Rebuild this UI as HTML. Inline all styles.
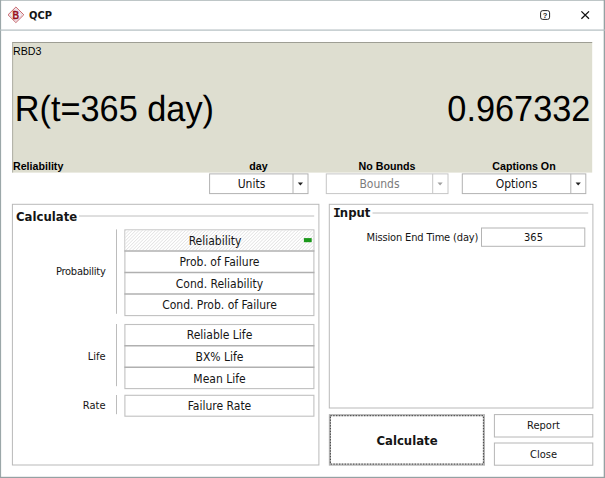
<!DOCTYPE html>
<html><head><meta charset="utf-8"><title>QCP</title>
<style>
*{box-sizing:border-box;margin:0;padding:0}
html,body{width:605px;height:478px;overflow:hidden;background:#fff}
body{position:relative;font-family:"DejaVu Sans Condensed","Liberation Sans",sans-serif;font-size:11px;color:#111}
.abs{position:absolute}
#lines{position:absolute;left:0;top:0}
.t{position:absolute;white-space:nowrap;line-height:16px;height:16px;color:#151515}
.c{text-align:center}
.r{text-align:right}
.ar{font-family:"Liberation Sans",sans-serif;color:#000}
.b{font-weight:bold}
.cap{font-size:10.67px}
.big{text-rendering:geometricPrecision;font-size:34.3px;line-height:40px;height:40px;transform:scaleY(1.055);transform-origin:0 32px}
.f12{font-size:12px}
.f13{font-size:13px}
</style></head><body>
<svg id="lines" width="605" height="478" viewBox="0 0 605 478">
 <defs>
  <pattern id="hatch" width="2.35" height="2.35" patternUnits="userSpaceOnUse" patternTransform="rotate(-45)">
   <rect width="2.35" height="2.35" fill="#fff"/><rect y="0" width="2.35" height="0.75" fill="#e2e2e2"/>
  </pattern>
 </defs>
 <!-- window frame -->
 <rect x="0" y="0" width="605" height="478" fill="#fff"/>
 <rect x="0" y="0" width="605" height="0.8" fill="#aeb8ba"/>
 <rect x="0" y="0" width="1.1" height="478" fill="#9ba7a9"/>
 <rect x="603.7" y="0" width="1.3" height="478" fill="#95a1a3"/>
 <rect x="0" y="476.8" width="605" height="1.2" fill="#95a1a3"/>
 <rect x="0" y="29.5" width="605" height="1.2" fill="#b3bec1"/>
 <!-- display panel -->
 <rect x="12.2" y="42.1" width="580" height="130.5" fill="#deded0"/>
 <rect x="12.2" y="42.1" width="580" height="0.9" fill="#97978d"/>
 <rect x="12.2" y="42.1" width="0.9" height="130.5" fill="#a9a99e"/>
 <!-- dropdowns -->
 <g fill="#fff" stroke="#b2b2b2" stroke-width="1">
  <rect x="209.6" y="173.9" width="98.4" height="19.7"/>
  <path d="M293 173.9V193.6"/>
  <rect x="462.3" y="173.9" width="123.5" height="19.7"/>
  <path d="M570.8 173.9V193.6"/>
 </g>
 <g fill="#fff" stroke="#c6c6c6" stroke-width="1">
  <rect x="326.3" y="173.9" width="121.7" height="19.7"/>
  <path d="M432.7 173.9V193.6"/>
 </g>
 <path d="M297.8 182.6h5.2l-2.6 2.8z" fill="#222"/>
 <path d="M575.6 182.6h5.2l-2.6 2.8z" fill="#222"/>
 <path d="M437.5 182.6h5.2l-2.6 2.8z" fill="#a0a0a0"/>
 <!-- group boxes -->
 <g fill="none" stroke="#b9b9b9" stroke-width="1">
  <rect x="12.4" y="204.3" width="306.5" height="260.7"/>
  <rect x="329.3" y="204.3" width="263.6" height="203.7"/>
 </g>
 <g stroke="#bebebe" stroke-width="1">
  <path d="M79 216H314.2"/>
  <path d="M372.5 213H588.2"/>
 </g>
 <g stroke="#b4b4b4" stroke-width="0.9">
  <path d="M116.5 229.4V313.8"/>
  <path d="M116.5 324V386.2"/>
  <path d="M116.5 395V414.2"/>
 </g>
 <!-- calculate option buttons -->
 <g fill="#fff" stroke="#c0c0c0" stroke-width="1.1">
  <rect x="124.9" y="229.9" width="189" height="85.7"/>
  <rect x="124.9" y="324.5" width="189" height="64.1"/>
  <rect x="124.9" y="395.3" width="189" height="20.9"/>
 </g>
 <rect x="125.5" y="230.5" width="187.8" height="20" fill="url(#hatch)"/>
 <g stroke="#b0b0b0" stroke-width="1.5">
  <path d="M124.4 251.1H314.4"/>
  <path d="M124.4 272.5H314.4"/>
  <path d="M124.4 294H314.4"/>
  <path d="M124.4 345.7H314.4"/>
  <path d="M124.4 367.2H314.4"/>
 </g>
 <rect x="303.9" y="238.1" width="7.8" height="4.1" fill="#1a981a"/>
 <!-- input field -->
 <rect x="481.5" y="228" width="103.3" height="18.3" fill="#fff" stroke="#b4b4b4" stroke-width="1"/>
 <!-- bottom buttons -->
 <rect x="329.4" y="414.7" width="155" height="50.4" fill="#fff" stroke="#b0b0b0" stroke-width="1.1"/>
 <rect x="330.4" y="415.7" width="153" height="48.4" fill="none" stroke="#b4b4b4" stroke-width="1"/><rect x="330.4" y="415.7" width="153" height="48.4" fill="none" stroke="#404040" stroke-width="1" stroke-dasharray="1.4 1.4"/>
 <g fill="#fff" stroke="#b6b6b6" stroke-width="1">
  <rect x="494.4" y="414.6" width="98.4" height="22.4"/>
  <rect x="494.4" y="443" width="98.4" height="22.2"/>
 </g>
 <!-- title icon -->
 <polygon points="15.9,7 23.8,14.8 15.9,22.6 8,14.8" fill="#eef3f8" stroke="#c5555b" stroke-width="0.9"/>
 <polygon points="15.9,8.7 22.1,14.8 15.9,20.9 9.7,14.8" fill="none" stroke="#ecc0c3" stroke-width="0.7"/>
 <text x="0" y="0" transform="translate(15.8 18.8) scale(0.86 1)" text-anchor="middle" font-family="Liberation Sans, sans-serif" font-weight="bold" font-size="10.6" fill="#9c1020" stroke="#9c1020" stroke-width="0.3">B</text>
 <!-- help + close -->
 <rect x="540.6" y="10.6" width="9" height="8.8" rx="2.2" fill="none" stroke="#222" stroke-width="1"/>
 <text x="545.1" y="17.6" text-anchor="middle" font-family="Liberation Sans, sans-serif" font-weight="bold" font-size="7.5" fill="#222">?</text>
 <path d="M581.4 11.4L589 18.8M589 11.4L581.4 18.8" stroke="#111" stroke-width="1.3" fill="none"/>
</svg>

<div id="title" class="t b" style="left:29px;top:8px">QCP</div>

<div id="cRBD" class="t ar cap" style="left:13px;top:43px">RBD3</div>
<div id="bigL" class="t ar big" style="left:14.8px;top:89.5px">R(t=365 day)</div>
<div id="bigR" class="t ar big" style="right:14.6px;top:89.5px">0.967332</div>
<div id="cRel" class="t ar cap b" style="left:13px;top:158px">Reliability</div>
<div id="cDay" class="t ar cap b c" style="left:209px;width:99px;top:158px">day</div>
<div id="cNB" class="t ar cap b c" style="left:326px;width:122px;top:158px">No Bounds</div>
<div id="cCO" class="t ar cap b c" style="left:462px;width:124px;top:158px">Captions On</div>

<div id="dUnits" class="t f12 c" style="left:210px;width:83px;top:176px">Units</div>
<div id="dBounds" class="t f12 c" style="left:326px;width:107px;top:176px;color:#7c7c7c">Bounds</div>
<div id="dOptions" class="t f12 c" style="left:462px;width:109px;top:176px">Options</div>

<div id="gCalc" class="t b f13" style="left:16px;top:209px">Calculate</div>
<div id="gInput" class="t b f13" style="left:333px;top:205px"><span style="font-family:'DejaVu Sans Mono',monospace;letter-spacing:-1px">I</span>nput</div>

<div id="lProb" class="t r" style="right:499.5px;top:264px;letter-spacing:-0.25px">Probability</div>
<div id="lLife" class="t r" style="right:499.5px;top:349px">Life</div>
<div id="lRate" class="t r" style="right:499.5px;top:398px">Rate</div>

<div id="b1" class="t f12 c" style="left:125px;width:180px;top:233px">Reliability</div>
<div id="b2" class="t f12 c" style="left:125px;width:189px;top:254px">Prob. of Failure</div>
<div id="b3" class="t f12 c" style="left:125px;width:189px;top:276px">Cond. Reliability</div>
<div id="b4" class="t f12 c" style="left:125px;width:189px;top:297px">Cond. Prob. of Failure</div>
<div id="b5" class="t f12 c" style="left:125px;width:189px;top:327px">Reliable Life</div>
<div id="b6" class="t f12 c" style="left:125px;width:189px;top:349px">BX% Life</div>
<div id="b7" class="t f12 c" style="left:125px;width:189px;top:371px">Mean Life</div>
<div id="b8" class="t f12 c" style="left:125px;width:189px;top:398px">Failure Rate</div>

<div id="lMission" class="t" style="left:366.5px;top:230px;letter-spacing:-0.15px">Mission End Time (day)</div>
<div id="inp" class="t c" style="left:482px;width:103px;top:230px">365</div>

<div id="bCalc" class="t b f13 c" style="left:329px;width:156px;top:433px">Calculate</div>
<div id="bRep" class="t c" style="left:494px;width:99px;top:418px">Report</div>
<div id="bClose" class="t c" style="left:494px;width:99px;top:447px">Close</div>
</body></html>
